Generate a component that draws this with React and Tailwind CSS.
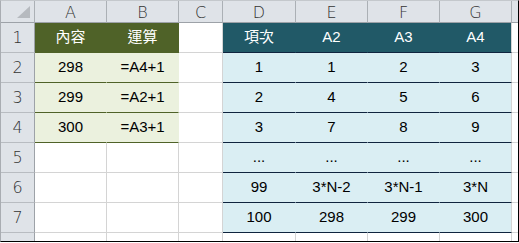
const COLS = ["A", "B", "C", "D", "E", "F", "G"];

const ROWS = [
  ["內容", "運算", "", "項次", "A2", "A3", "A4"],
  ["298", "=A4+1", "", "1", "1", "2", "3"],
  ["299", "=A2+1", "", "2", "4", "5", "6"],
  ["300", "=A3+1", "", "3", "7", "8", "9"],
  ["", "", "", "...", "...", "...", "..."],
  ["", "", "", "99", "3*N-2", "3*N-1", "3*N"],
  ["", "", "", "100", "298", "299", "300"],
];

const headFont = "font-['DejaVu_Sans',sans-serif] font-extralight text-[16px] text-[#333]";
const cellFont = "font-['Liberation_Sans','Noto_Sans_CJK_TC',sans-serif] text-[15px]";

function cellClass(r, c) {
  // r: 0-based data row, c: 0-based column (A = 0)
  if (c <= 1 && r === 0) return "bg-[#4f6228] text-white border-r-[#4f6228] border-b-[#4f6228]";
  if (c <= 1 && r <= 3) return "bg-[#ebf1de] text-black border-r-[#ebf1de] border-b-[#4f6228]";
  if (c >= 3 && r === 0) {
    const right = c === 6 ? "border-r-[#d4d4d4]" : "border-r-[#215967]";
    return `bg-[#215967] text-white ${right} border-b-[#0f243e]`;
  }
  if (c >= 3) {
    const right = c === 6 ? "border-r-[#d4d4d4]" : "border-r-[#daeef3]";
    return `bg-[#daeef3] text-black ${right} border-b-[#0f243e]`;
  }
  return "bg-white border-r-[#d4d4d4] border-b-[#d4d4d4]";
}

export default function App() {
  return (
    <div className="w-[519px] h-[243px] bg-white">
      <div className="h-[242px] border-l border-t border-r border-b border-l-[#a9adb2] border-t-[#c4c8cc] border-r-black border-b-black grid grid-cols-[34px_72px_72px_44px_73px_72px_72px_72px_1fr] grid-rows-[22px_repeat(7,30px)_1fr]">
        {/* corner */}
        <div className="bg-[#dfe3e8] border-r border-b border-r-[#abb0b5] border-b-[#9da2a8] flex items-end justify-end pr-[4px] pb-[4px]">
          <svg width="13" height="12" viewBox="0 0 13 12">
            <polygon points="13,0 13,12 0,12" fill="#b6babf" />
          </svg>
        </div>

        {/* column letters */}
        {COLS.map((col) => (
          <div
            key={col}
            className={`bg-[#dfe3e8] border-r border-b border-r-[#abb0b5] border-b-[#9da2a8] flex items-center justify-center pt-[2px] ${headFont}`}
          >
            {col}
          </div>
        ))}
        <div className="bg-[#dfe3e8] border-b border-b-[#9da2a8]"></div>

        {/* data rows */}
        {ROWS.map((row, r) => (
          <div key={r} className="contents">
            <div className={`bg-[#dfe3e8] border-r border-b border-r-[#9da2a8] border-b-[#b8bcc1] flex items-end justify-center pb-[2px] ${headFont}`}>
              {r + 1}
            </div>
            {row.map((val, c) => (
              <div
                key={c}
                className={`border-r border-b flex items-center justify-center ${cellFont} ${cellClass(r, c)}`}
              >
                {val}
              </div>
            ))}
            <div className="bg-white border-b border-b-[#d4d4d4]"></div>
          </div>
        ))}

        {/* partial row 8 */}
        <div className="bg-[#dfe3e8] border-r border-r-[#9da2a8]"></div>
        {COLS.map((col) => (
          <div key={col} className="bg-white border-r border-r-[#d4d4d4]"></div>
        ))}
        <div className="bg-white"></div>
      </div>
    </div>
  );
}
